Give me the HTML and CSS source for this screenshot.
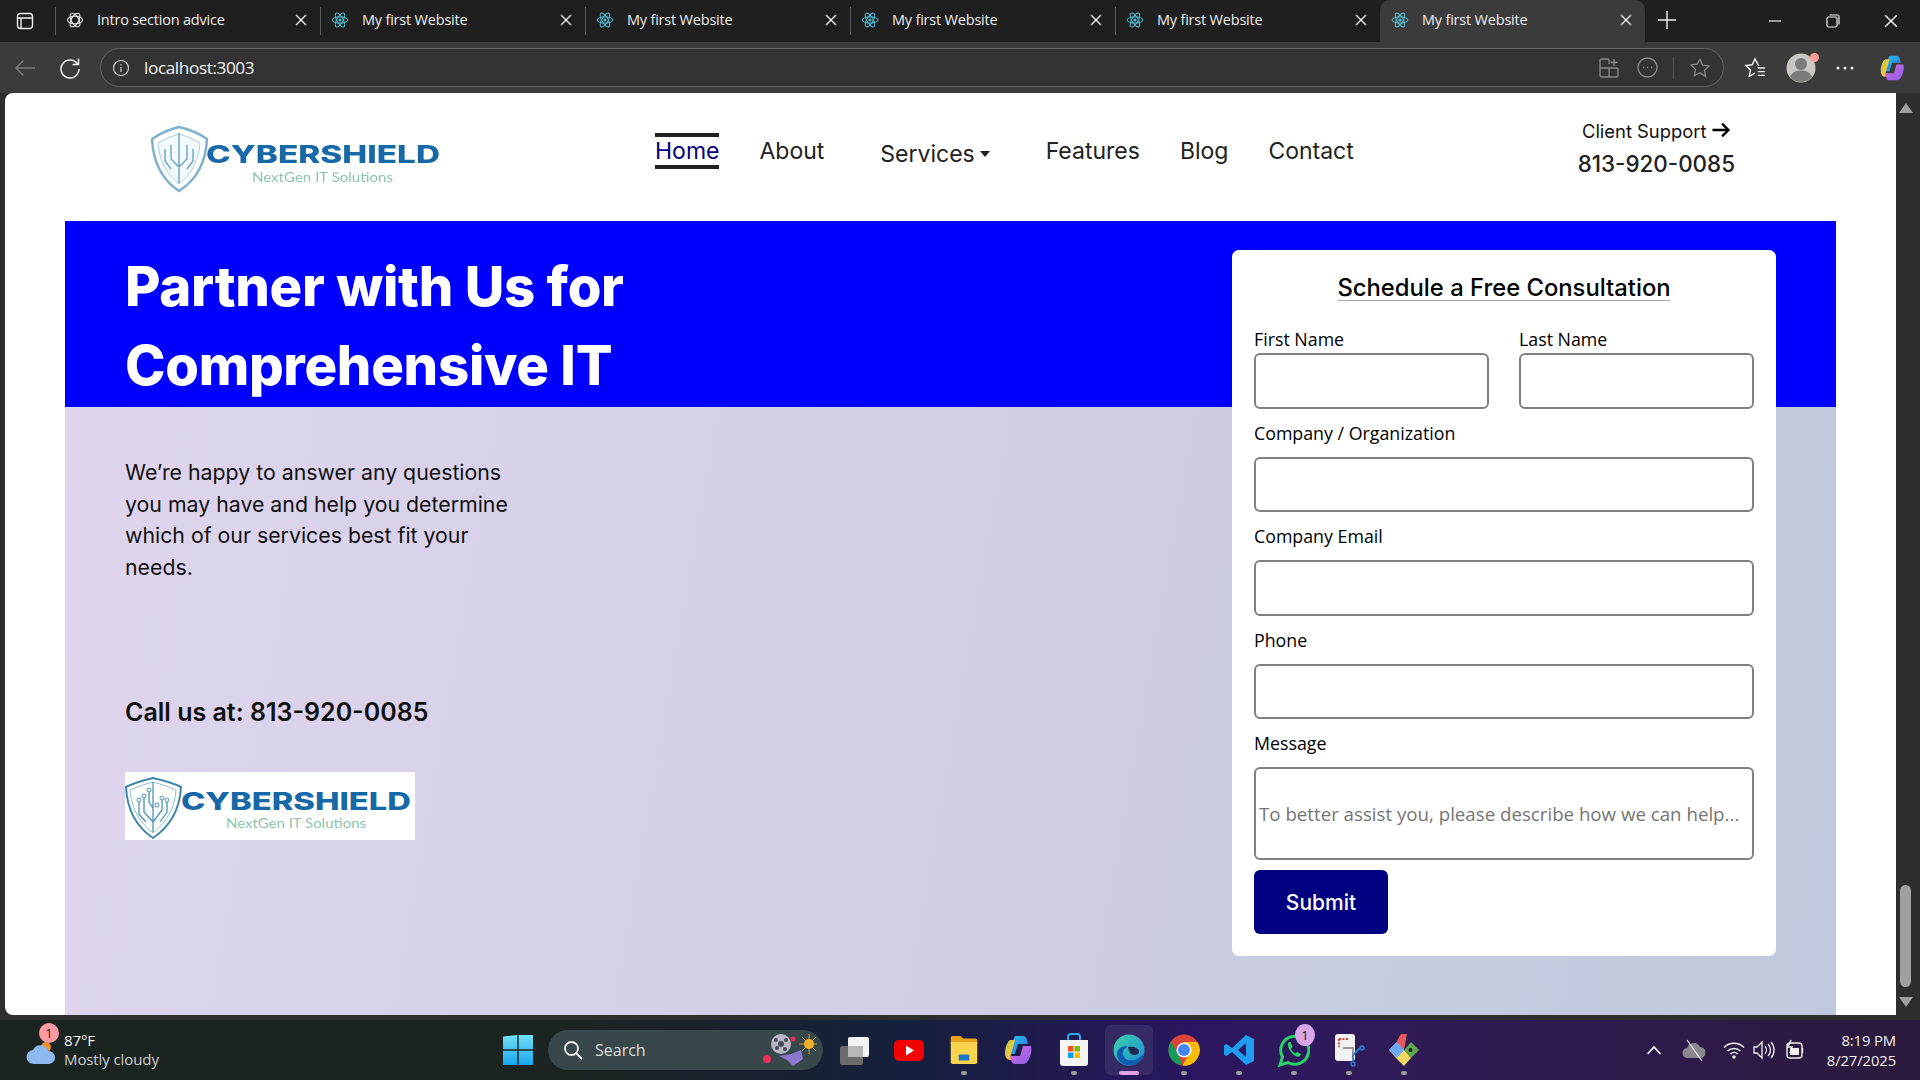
FILE: index.html
```html
<!DOCTYPE html>
<html lang="en">

<head>
  <meta charset="UTF-8" />
  <meta name="viewport" content="width=device-width, initial-scale=1.0" />
  <title>My first Website</title>
  <link rel="stylesheet" href="styles.css">
</head>

<body>
  <svg class="defs" width="0" height="0" aria-hidden="true">
    <symbol id="atom" viewBox="0 0 24 24">
      <g fill="none" stroke="#58c4dc" stroke-width="1.3">
        <ellipse cx="12" cy="12" rx="10.5" ry="4.2" />
        <ellipse cx="12" cy="12" rx="10.5" ry="4.2" transform="rotate(60 12 12)" />
        <ellipse cx="12" cy="12" rx="10.5" ry="4.2" transform="rotate(120 12 12)" />
      </g>
      <circle cx="12" cy="12" r="2" fill="#58c4dc" />
    </symbol>
    <symbol id="cross" viewBox="0 0 12 12">
      <path d="M1 1l10 10M11 1L1 11" fill="none" stroke="#fff" stroke-width="1.2" />
    </symbol>
    <symbol id="copilot" viewBox="0 0 32 32">
      <defs>
        <linearGradient id="cpa" x1="0" y1="0" x2="1" y2="1">
          <stop offset="0" stop-color="#27c4e8" />
          <stop offset="1" stop-color="#2f6fe0" />
        </linearGradient>
        <linearGradient id="cpb" x1="0" y1="0" x2="1" y2="1">
          <stop offset="0" stop-color="#9fd24a" />
          <stop offset=".6" stop-color="#f6c63c" />
          <stop offset="1" stop-color="#f2653a" />
        </linearGradient>
        <linearGradient id="cpc" x1="0" y1="0" x2="1" y2="1">
          <stop offset="0" stop-color="#d66ee0" />
          <stop offset="1" stop-color="#8a5be8" />
        </linearGradient>
      </defs>
      <path d="M12 2h8c2 0 3 1 3.6 3l1.4 5h-10l-3 10H4z" fill="url(#cpa)" />
      <path d="M2 19c0-4 1-8 3-11 1-1.500 2-2 3-2h4L8 20c-.6 2 0 6 2 6H7c-3 0-5-3-5-7z" fill="url(#cpb)" />
      <path d="M20 30h-8c-2 0-3-1-3.600-3L7 22h10l3-10h8c1 4 0 9-2 13-1.500 3-3 5-6 5z" fill="url(#cpc)" />
    </symbol>
  </svg>

  <div class="tabstrip">
    <div class="sidebar-btn">
      <svg width="18" height="18" viewBox="0 0 18 18" fill="none" stroke="#f0f0f0" stroke-width="1.400">
        <rect x="1.500" y="1.500" width="15" height="15" rx="3" />
        <path d="M1.500 6h15M5 6v10" />
      </svg>
    </div>
    <div class="tab">
      <svg class="tab-icon" viewBox="0 0 24 24" fill="none" stroke="#e6e6e6" stroke-width="1.500">
        <ellipse cx="12" cy="12" rx="10" ry="5" />
        <ellipse cx="12" cy="12" rx="10" ry="5" transform="rotate(60 12 12)" />
        <ellipse cx="12" cy="12" rx="10" ry="5" transform="rotate(120 12 12)" />
      </svg>
      <span class="tab-title">Intro section advice</span>
      <svg class="tab-close"><use href="#cross" /></svg>
    </div>
    <div class="tab">
      <svg class="tab-icon"><use href="#atom" /></svg>
      <span class="tab-title">My first Website</span>
      <svg class="tab-close"><use href="#cross" /></svg>
    </div>
    <div class="tab">
      <svg class="tab-icon"><use href="#atom" /></svg>
      <span class="tab-title">My first Website</span>
      <svg class="tab-close"><use href="#cross" /></svg>
    </div>
    <div class="tab">
      <svg class="tab-icon"><use href="#atom" /></svg>
      <span class="tab-title">My first Website</span>
      <svg class="tab-close"><use href="#cross" /></svg>
    </div>
    <div class="tab tab-before-active">
      <svg class="tab-icon"><use href="#atom" /></svg>
      <span class="tab-title">My first Website</span>
      <svg class="tab-close"><use href="#cross" /></svg>
    </div>
    <div class="tab active">
      <svg class="tab-icon"><use href="#atom" /></svg>
      <span class="tab-title">My first Website</span>
      <svg class="tab-close"><use href="#cross" /></svg>
    </div>
    <svg class="new-tab" width="18" height="18" viewBox="0 0 18 18">
      <path d="M9 0v18M0 9h18" stroke="#f0f0f0" stroke-width="1.400" />
    </svg>
    <div class="window-btns">
      <svg width="14" height="14" viewBox="0 0 14 14"><path d="M1 7h12" stroke="#eee" stroke-width="1.200" /></svg>
      <svg width="14" height="14" viewBox="0 0 14 14" fill="none" stroke="#eee" stroke-width="1.200">
        <rect x="1" y="3" width="10" height="10" rx="1.500" />
        <path d="M3.500 1h8c1 0 1.500.5 1.500 1.500v8" />
      </svg>
      <svg width="14" height="14" viewBox="0 0 14 14"><use href="#cross" /></svg>
    </div>
  </div>

  <div class="toolbar">
    <svg class="nav-btn back" width="22" height="18" viewBox="0 0 22 18" fill="none" stroke="#7a7a7a" stroke-width="1.400">
      <path d="M21 9H2M9.500 1.500L2 9l7.500 7.500" />
    </svg>
    <svg class="nav-btn reload" width="22" height="22" viewBox="0 0 22 22" fill="none" stroke="#f2f2f2" stroke-width="1.500">
      <path d="M18.500 7A9 9 0 1 0 20 12" />
      <path d="M19.500 1.500V7.500H13.500" />
    </svg>
    <div class="omnibox">
      <svg width="18" height="18" viewBox="0 0 18 18" fill="none" stroke="#cfcfcf" stroke-width="1.200">
        <circle cx="9" cy="9" r="7.500" />
        <path d="M9 8v5M9 5v1.500" />
      </svg>
      <span class="url">localhost:3003</span>
      <div class="omni-actions">
        <svg width="20" height="20" viewBox="0 0 20 20" fill="none" stroke="#8a8a8a" stroke-width="1.300">
          <path d="M10 6V2.500C10 1.500 9.500 1 8.500 1h-6C1.500 1 1 1.500 1 2.500v15c0 1 .5 1.500 1.500 1.500h15c1 0 1.500-.5 1.500-1.500v-6c0-1-.5-1.500-1.500-1.500H1M10 10v9" />
          <path d="M15 1v7M11.500 4.500h7" />
        </svg>
        <svg width="21" height="21" viewBox="0 0 21 21" fill="none" stroke="#8a8a8a" stroke-width="1.300">
          <circle cx="10.500" cy="10.500" r="9.500" />
          <path d="M6 10.500h1.200M10 10.500h1.200M14 10.500h1.200" />
        </svg>
        <span class="omni-sep"></span>
        <svg width="22" height="22" viewBox="0 0 24 24" fill="none" stroke="#8a8a8a" stroke-width="1.400">
          <path d="M12 2.500l3 6.300 6.900.9-5 4.800 1.200 6.900L12 17.200l-6.100 3.200 1.200-6.900-5-4.800 6.900-.9z" />
        </svg>
      </div>
    </div>
    <div class="toolbar-actions">
      <svg width="22" height="22" viewBox="0 0 24 24" fill="none" stroke="#f2f2f2" stroke-width="1.500">
        <path d="M16 9.500L12 2 9 8.500l-7 .9 5 4.800L5.800 21l6.200-3.300M15 12h8M15 16h8M15 20h8" />
      </svg>
      <div class="profile">
        <svg width="30" height="30" viewBox="0 0 30 30">
          <circle cx="15" cy="15" r="14.500" fill="#c9c7c2" />
          <circle cx="15" cy="11" r="6" fill="#7e7c78" />
          <path d="M4 24c2-5 6-6.500 11-6.500S24 19 26 24a14.500 14.500 0 0 1-22 0z" fill="#7e7c78" />
        </svg>
        <span class="profile-dot"></span>
      </div>
      <svg width="18" height="4" viewBox="0 0 18 4" fill="#eee">
        <circle cx="2" cy="2" r="1.500" />
        <circle cx="9" cy="2" r="1.500" />
        <circle cx="16" cy="2" r="1.500" />
      </svg>
      <svg class="copilot-btn" width="28" height="28"><use href="#copilot" /></svg>
    </div>
  </div>

  <div class="viewport">
    <div class="page">
      <header class="site-header">
        <svg class="logo logo-soft" width="290" height="68" viewBox="0 0 290 68" role="img" aria-label="CyberShield logo">
          <path d="M1 14C11 7 20 4 28 2c9 2 18 5 28 12-1 21-9 40-28 52C10 54 2 35 1 14z" fill="none" stroke="#7fb2cf" stroke-width="2.500" />
          <path d="M7 18c7-4 14-7 21-9 7 2 14 5 21 9-1 16-8 31-21 41C15 49 8 34 7 18z" fill="#f4f9fc" stroke="#a9cfe2" />
          <path d="M28 8v50M20 20v14l8 8M36 20v14l-8 8M14 24v12l6 8M42 24v12l-6 8" fill="none" stroke="#6fa8c8" stroke-width="1.500" />
          <text class="logo-name" x="55" y="38" textLength="234" lengthAdjust="spacingAndGlyphs">CYBERSHIELD</text>
          <text class="logo-tag" x="101" y="57" textLength="141" lengthAdjust="spacingAndGlyphs">NextGen IT Solutions</text>
        </svg>
        <nav class="main-nav">
          <a class="current">Home</a>
          <a>About</a>
          <a class="dropdown">Services<i class="caret"></i></a>
          <a>Features</a>
          <a>Blog</a>
          <a>Contact</a>
        </nav>
        <div class="support">
          <div class="support-label">Client Support
            <svg width="19" height="16" viewBox="0 0 17 15" fill="none" stroke="#000" stroke-width="2.200">
              <path d="M0 7.500h15M9 1.500l6 6-6 6" />
            </svg>
          </div>
          <div class="support-phone">813-920-0085</div>
        </div>
      </header>

      <section class="hero">
        <div class="hero-copy">
          <h1>Partner with Us for Comprehensive IT</h1>
          <p class="hero-text">We’re happy to answer any questions you may have and help you determine which of our services best fit your needs.</p>
          <p class="hero-call">Call us at: 813-920-0085</p>
          <svg class="logo logo-card" width="290" height="68" viewBox="0 0 290 68" role="img" aria-label="CyberShield logo">
            <path d="M1 15C11 10 20 8 28 6c9 2 18 4 28 9-1 20-9 38-28 51C10 54 2 35 1 15z" fill="none" stroke="#3f86aa" stroke-width="2" />
            <path d="M5 18c7-3 15-6 23-8 8 2 16 5 23 8-1 16-8 31-23 43C13 49 6 34 5 18z" fill="none" stroke="#8cc0d8" />
            <path d="M28 10v50M19 24v16l9 10M37 26v12l-9 12M14 28v14l7 8M42 28v12l-7 10M24 18v12l4 6" fill="none" stroke="#4a94b8" stroke-width="1.300" />
            <g fill="#fff" stroke="#4a94b8">
              <circle cx="19" cy="24" r="2" />
              <circle cx="37" cy="26" r="2" />
              <circle cx="14" cy="28" r="2" />
              <circle cx="42" cy="28" r="2" />
              <circle cx="24" cy="18" r="2" />
              <circle cx="32" cy="33" r="2" />
            </g>
            <text class="logo-name" x="56" y="38" textLength="230" lengthAdjust="spacingAndGlyphs">CYBERSHIELD</text>
            <text class="logo-tag" x="101" y="56" textLength="140" lengthAdjust="spacingAndGlyphs">NextGen IT Solutions</text>
          </svg>
        </div>

        <form class="consult-card">
          <h3>Schedule a Free Consultation</h3>
          <div class="name-row">
            <div>
              <label class="name-label" for="first">First Name</label>
              <input id="first" type="text" />
            </div>
            <div>
              <label class="name-label" for="last">Last Name</label>
              <input id="last" type="text" />
            </div>
          </div>
          <label for="company">Company / Organization</label>
          <input id="company" type="text" />
          <label for="email">Company Email</label>
          <input class="field-tall" id="email" type="email" />
          <label for="phone">Phone</label>
          <input id="phone" type="tel" />
          <label for="message">Message</label>
          <textarea id="message" placeholder="To better assist you, please describe how we can help..."></textarea>
          <button class="submit" type="button">Submit</button>
        </form>
      </section>
    </div>

    <div class="scrollbar">
      <i class="arrow-up"></i>
      <div class="scroll-bottom">
        <div class="thumb"></div>
        <i class="arrow-down"></i>
      </div>
    </div>
  </div>
  <div class="viewport-foot"></div>

  <footer class="taskbar">
    <div class="weather">
      <div class="weather-icon">
        <svg width="30" height="24" viewBox="0 0 30 24">
          <circle cx="20" cy="6" r="5" fill="#f0902c" />
          <path d="M8 23a7 7 0 0 1-1-14 8 8 0 0 1 15 1 6.500 6.500 0 0 1 1 13z" fill="#8db8f0" />
        </svg>
        <span class="weather-badge">1</span>
      </div>
      <div class="weather-text">
        <span>87°F</span>
        <span class="weather-desc">Mostly cloudy</span>
      </div>
    </div>

    <svg class="win-logo" width="30" height="30" viewBox="0 0 30 30">
      <defs>
        <linearGradient id="win" x1="0" y1="0" x2="0" y2="1">
          <stop offset="0" stop-color="#6fe0f5" />
          <stop offset="1" stop-color="#1aa5f0" />
        </linearGradient>
      </defs>
      <path d="M0 1.500L14.300 0v14.300H0zM15.700 0H30v14.300H15.700zM0 15.700h14.300V30H0zM15.700 15.700H30V30H15.700z" fill="url(#win)" />
    </svg>

    <div class="searchbox">
      <svg width="20" height="20" viewBox="0 0 20 20" fill="none" stroke="#eee" stroke-width="1.800">
        <circle cx="8.500" cy="8.500" r="6.500" />
        <path d="M13.500 13.500L19 19" />
      </svg>
      <span>Search</span>
      <svg class="search-art" width="58" height="36" viewBox="0 0 58 36">
        <circle cx="22" cy="12" r="10" fill="#b9b6c6" />
        <circle cx="22" cy="12" r="3" fill="#4a4a58" />
        <circle cx="17" cy="8" r="2" fill="#4a4a58" />
        <circle cx="27" cy="8" r="2" fill="#4a4a58" />
        <circle cx="18" cy="16" r="2" fill="#4a4a58" />
        <circle cx="26" cy="17" r="2" fill="#4a4a58" />
        <path d="M20 24l12-2 10-4 2 9-10 7-6-6z" fill="#8a78d0" />
        <circle cx="8" cy="27" r="4" fill="#e8305a" />
        <circle cx="34" cy="7" r="2.500" fill="#e8305a" />
        <circle cx="50" cy="12" r="5" fill="#f2b02c" />
        <path d="M50 2v20M40 12h18M43 5l14 14M57 5L43 19" stroke="#f2b02c" stroke-width=".8" />
      </svg>
    </div>

    <div class="task-icons">
      <div class="task-slot">
        <svg width="32" height="32" viewBox="0 0 32 32">
          <rect x="2" y="12" width="23" height="19" rx="2" fill="#6b6b6b" />
          <rect x="10" y="3" width="21" height="20" rx="2" fill="#f2f2f2" />
          <rect x="10" y="12" width="15" height="11" fill="#b8b8b8" />
        </svg>
      </div>
      <div class="task-slot">
        <svg width="32" height="32" viewBox="0 0 32 32">
          <rect x="1" y="6" width="30" height="21" rx="5" fill="#f40000" />
          <path d="M13 11.500v10l8-5z" fill="#fff" />
        </svg>
      </div>
      <div class="task-slot running">
        <svg width="30" height="30" viewBox="0 0 32 34">
          <path d="M1 3c0-1 1-2 2-2h9l3 3h14c1 0 2 1 2 2v4H1z" fill="#e8a41c" />
          <path d="M1 8h30v23c0 1-1 2-2 2H3c-1 0-2-1-2-2z" fill="#fbd44e" />
          <rect x="10" y="22" width="12" height="7" rx="1" fill="#1a78c8" />
        </svg>
      </div>
      <div class="task-slot">
        <svg width="32" height="32"><use href="#copilot" /></svg>
      </div>
      <div class="task-slot running">
        <svg width="30" height="34" viewBox="0 0 30 34">
          <path d="M9 8V4c0-2 1-3 3-3h6c2 0 3 1 3 3v4" fill="none" stroke="#2aa8e8" stroke-width="2" />
          <path d="M1 7h28v23c0 2-1 3-3 3H4c-2 0-3-1-3-3z" fill="#f4f4f4" />
          <rect x="9" y="13" width="5.500" height="5.500" fill="#f25022" />
          <rect x="15.500" y="13" width="5.500" height="5.500" fill="#7fba00" />
          <rect x="9" y="19.500" width="5.500" height="5.500" fill="#00a4ef" />
          <rect x="15.500" y="19.500" width="5.500" height="5.500" fill="#ffb900" />
        </svg>
      </div>
      <div class="task-slot current-app">
        <svg width="32" height="34" viewBox="0 0 32 32">
          <defs>
            <linearGradient id="edgeA" x1="0" y1="0" x2="1" y2="1">
              <stop offset="0" stop-color="#3fd0a8" />
              <stop offset="1" stop-color="#1a8ed8" />
            </linearGradient>
          </defs>
          <circle cx="16" cy="16" r="15.500" fill="url(#edgeA)" />
          <path d="M31 19c-1 8-8 12.500-14 12.500C9 31.500 3 26 4 19c1-5 7-8 11-6-5 1-6 6-4 10 3 5 13 5 20-4z" fill="#0c5fb0" />
          <path d="M15 13c6-1 11 1 11 5 0 2-2 3-5 3-4 0-5-4-6-8z" fill="#1e2a52" />
        </svg>
      </div>
      <div class="task-slot running">
        <svg width="32" height="32" viewBox="0 0 32 32">
          <circle cx="16" cy="16" r="15.500" fill="#db4437" />
          <path d="M16 8h13.500a15.500 15.500 0 0 1-15 23.500L21 20z" fill="#fbbc05" />
          <path d="M3 7.500L10 20l4.500 11.500A15.500 15.500 0 0 1 3 7.500z" fill="#0f9d58" />
          <circle cx="16" cy="16" r="7.500" fill="#fff" />
          <circle cx="16" cy="16" r="6" fill="#4285f4" />
        </svg>
      </div>
      <div class="task-slot running">
        <svg width="32" height="32" viewBox="0 0 32 32">
          <path d="M23 1l8 4v22l-8 4L9 18l-5.500 4L1 20.500v-9L3.500 10 9 14zM23 9l-8 7 8 7z" fill="#1f9cf0" />
        </svg>
      </div>
      <div class="task-slot running">
        <svg width="32" height="34" viewBox="0 0 32 34">
          <path d="M2 32l2.500-8A14 14 0 1 1 10 29.500z" fill="none" stroke="#25d366" stroke-width="3" />
          <path d="M11 9c-2 2-1 6 2 10s7 6 9 4l1-2-4-2-1.500 1.500c-2-1-4-3-4.500-5L14.500 14l-2-5z" fill="#25d366" />
        </svg>
        <span class="app-badge">1</span>
      </div>
      <div class="task-slot running">
        <svg width="32" height="34" viewBox="0 0 32 34">
          <rect x="2" y="1" width="20" height="27" rx="3" fill="#f2f2f2" />
          <path d="M6 6h10M6 6v8" stroke="#d8442c" stroke-width="2" stroke-dasharray="2 1.500" fill="none" />
          <path d="M10 15h10v8" fill="none" stroke="#9a9a9a" stroke-width="2" />
          <path d="M20 22l8-8M20 22v6" stroke="#2a7fd0" stroke-width="1.800" fill="none" />
          <circle cx="20" cy="31" r="2" fill="none" stroke="#2a7fd0" stroke-width="1.500" />
          <circle cx="29" cy="15" r="2" fill="none" stroke="#2a7fd0" stroke-width="1.500" />
        </svg>
      </div>
      <div class="task-slot running">
        <svg width="32" height="34" viewBox="0 0 32 34">
          <path d="M16 17L1 17 8.500 9z" fill="#6ea8f5" />
          <path d="M16 17L8.500 9 13 1h6z" fill="#e85a5a" />
          <path d="M16 17l7-8 8 8-8 8z" fill="#5aa84a" />
          <path d="M16 17H1l8 9 7 7 7-8z" fill="#f2d860" />
          <path d="M1 17l8-8 7 8-7 8z" fill="#6ea8f5" />
          <circle cx="22.500" cy="17" r="2" fill="#1e1e1e" />
        </svg>
      </div>
    </div>

    <div class="tray">
      <svg width="16" height="10" viewBox="0 0 16 10" fill="none" stroke="#f2f2f2" stroke-width="1.800">
        <path d="M1.500 9L8 2l6.500 7" />
      </svg>
      <svg class="tray-cloud" width="24" height="24" viewBox="0 0 24 24">
        <path d="M6 20a5 5 0 0 1-1-10 7 7 0 0 1 13-1 5.500 5.500 0 0 1 0 11z" fill="#8b8790" />
        <path d="M5 2l15 21" stroke="#f2f2f2" stroke-width="1.200" />
      </svg>
      <svg class="tray-wifi" width="22" height="18" viewBox="0 0 22 18" fill="none" stroke="#f2f2f2" stroke-width="1.500">
        <path d="M1 6.500a14 14 0 0 1 20 0M4.500 10a9.500 9.500 0 0 1 13 0M7.500 13a5 5 0 0 1 7 0" />
        <circle cx="11" cy="16" r="1" fill="#f2f2f2" />
      </svg>
      <svg width="22" height="20" viewBox="0 0 22 20" fill="none" stroke="#f2f2f2" stroke-width="1.300">
        <path d="M1 7v6h3l5 5V2L4 7z" />
        <path d="M12 6.500a5 5 0 0 1 0 7M15 4a8.500 8.500 0 0 1 0 12M18 2a12 12 0 0 1 0 16" />
      </svg>
      <svg width="22" height="22" viewBox="0 0 22 22" fill="none" stroke="#f2f2f2" stroke-width="1.400">
        <rect x="4" y="4" width="15" height="15" rx="3" />
        <path d="M19.500 9v5" />
        <path d="M8 1L5 8h4l-2 6" />
        <rect x="7" y="9" width="9" height="7" fill="#f2f2f2" stroke="none" />
      </svg>
      <div class="clock">
        <span>8:19 PM</span>
        <span>8/27/2025</span>
      </div>
    </div>
  </footer>
</body>

</html>
```

FILE: styles.css
```css
/* reset */
* {
  box-sizing: border-box;
}

body {
  margin: 0;
  width: 1920px;
  height: 1080px;
  overflow: hidden;
  display: flex;
  flex-direction: column;
  background: #2e2e2e;
  font-family: "Inter", "Liberation Sans", sans-serif;
}

.defs {
  position: absolute;
}

/* browser tab strip */
.tabstrip {
  height: 42px;
  display: flex;
  align-items: center;
  background: #1f1f1f;
  font-family: "Open Sans", sans-serif;
  color: #ececec;
}

.sidebar-btn {
  width: 55px;
  padding-left: 16px;
  display: flex;
}

.tab {
  width: 265px;
  height: 42px;
  display: flex;
  align-items: center;
  position: relative;
  padding-left: 11px;
  padding-bottom: 3px;
}

.tab::before {
  content: "";
  position: absolute;
  left: 0;
  top: 7px;
  height: 28px;
  width: 1px;
  background: #5a5a5a;
}

.tab.active {
  background: #3b3b3b;
  border-radius: 10px 10px 0 0;
}

.tab.active::before {
  display: none;
}

.tab-icon {
  width: 18px;
  height: 18px;
  flex: none;
}

.tab-title {
  margin-left: 13px;
  font-size: 14.500px;
  letter-spacing: -0.2px;
  flex: 1;
}

.tab-close {
  width: 12px;
  height: 12px;
  margin-right: 13px;
  flex: none;
}

.new-tab {
  margin-left: 13px;
  margin-bottom: 2px;
}

.window-btns {
  margin-left: auto;
  width: 152px;
  padding-right: 22px;
  display: flex;
  justify-content: space-between;
  align-items: center;
}

/* browser toolbar */
.toolbar {
  height: 51px;
  display: flex;
  align-items: center;
  background: #3b3b3b;
}

.nav-btn.back {
  margin-left: 14px;
}

.nav-btn.reload {
  margin-left: 23px;
}

.omnibox {
  margin-left: 19px;
  width: 1624px;
  height: 39px;
  display: flex;
  align-items: center;
  padding-left: 11px;
  background: #333;
  border: 1.5px solid #666;
  border-radius: 20px;
}

.url {
  margin-left: 14px;
  color: #f2f2f2;
  font-size: 17.200px;
  font-family: "Open Sans", sans-serif;
  letter-spacing: -0.4px;
}

.omni-actions {
  margin-left: auto;
  display: flex;
  align-items: center;
  padding-right: 12px;
  gap: 18px;
}

.omni-sep {
  width: 1px;
  height: 22px;
  background: #5a5a5a;
  margin: 0 -3px;
}

.toolbar-actions {
  display: flex;
  align-items: center;
  margin-left: 20px;
  gap: 20px;
}

.copilot-btn {
  margin-left: 5px;
}

.profile {
  position: relative;
  display: flex;
}

.profile-dot {
  position: absolute;
  top: 0;
  right: -3px;
  width: 9px;
  height: 9px;
  border-radius: 50%;
  background: #ff9b9b;
}

/* page area */
.viewport {
  height: 922px;
  display: flex;
  padding-left: 5px;
}

.page {
  width: 1891px;
  background: #fff;
  border-radius: 8px 0 0 8px;
  overflow: hidden;
}

.viewport-foot {
  height: 5px;
  background: #2e2e2e;
}

.site-header {
  height: 128px;
  display: flex;
  align-items: flex-start;
  padding-left: 146px;
  padding-right: 161px;
  color: #222;
}

.logo {
  flex: none;
  display: block;
}

.logo-soft {
  margin-top: 32px;
  filter: blur(0.5px);
}

.logo-name {
  font-family: "Inter", sans-serif;
  font-weight: 800;
  font-size: 24px;
  fill: #1668a6;
}

.logo-tag {
  font-family: "Lato", sans-serif;
  font-size: 14px;
  fill: #8cc7ac;
}

.main-nav {
  display: flex;
  align-items: center;
  margin-top: 37px;
  margin-left: 214px;
  gap: 40px;
  font-size: 23px;
}

.main-nav a {
  border-top: 4px solid transparent;
  border-bottom: 4px solid transparent;
  height: 36px;
  line-height: 29px;
  white-space: nowrap;
}

.main-nav a.current {
  color: #000080;
  border-color: #222;
}

.main-nav a.dropdown {
  display: flex;
  align-items: center;
  margin: 6px 16px 0;
}

.caret {
  margin-left: 5px;
  border-top: 6px solid #222;
  border-left: 5px solid transparent;
  border-right: 5px solid transparent;
}

.support {
  margin-left: auto;
  margin-top: 23px;
  text-align: center;
}

.support-label {
  font-size: 18.400px;
  line-height: 30px;
  color: #111;
}

.support-phone {
  font-size: 22.400px;
  line-height: 36px;
  font-weight: 500;
}

/* hero section */
.hero {
  margin: 0 60px;
  height: 794px;
  display: flex;
  justify-content: space-between;
  background:
    linear-gradient(#0000ff, #0000ff) top / 100% 186px no-repeat,
    linear-gradient(100deg, #e0d5ee, #bfc8dc);
}

.hero-copy {
  padding-left: 60px;
  padding-top: 26px;
}

.hero-copy h1 {
  margin: 0;
  width: 560px;
  color: #fff;
  font-size: 54.500px;
  line-height: 79px;
  font-weight: 800;
  letter-spacing: -0.3px;
}

.hero-text {
  margin: 52px 0 0;
  width: 400px;
  font-size: 21.300px;
  line-height: 31.700px;
  color: #111;
}

.hero-call {
  margin: 113px 0 0;
  font-size: 25px;
  line-height: 30px;
  font-weight: 600;
  color: #111;
}

.logo-card {
  margin-top: 45px;
  background: #fff;
}

/* consultation form */
.consult-card {
  margin-top: 29px;
  margin-right: 60px;
  width: 544px;
  height: 706px;
  padding: 20px 22px 22px;
  background: #fff;
  border-radius: 7px;
  font-family: "Open Sans", sans-serif;
  color: #000;
}

.consult-card h3 {
  margin: 0 0 21px;
  text-align: center;
  font-family: "Inter", sans-serif;
  font-size: 23.800px;
  line-height: 36px;
  font-weight: 500;
  text-decoration: underline;
  text-decoration-thickness: 1px;
  text-decoration-color: #aaa;
  text-underline-offset: 4px;
}

.name-row {
  display: grid;
  grid-template-columns: 235px 235px;
  justify-content: space-between;
  margin-bottom: 12px;
}

.consult-card label {
  display: block;
  font-size: 17.800px;
  line-height: 24px;
  margin-bottom: 12px;
}

.consult-card label.name-label {
  margin-bottom: 2px;
}

.consult-card input,
.consult-card textarea {
  display: block;
  width: 100%;
  height: 55px;
  margin-bottom: 12px;
  border: 2px solid #808080;
  border-radius: 6px;
  background: #fff;
  outline: none;
  resize: none;
  font-family: "Open Sans", sans-serif;
}

.consult-card input.field-tall,
.name-row input {
  height: 56px;
}

.name-row input {
  margin-bottom: 0;
}

.consult-card textarea {
  height: 93px;
  margin-bottom: 10px;
  padding: 33px 3px 0;
  font-size: 18.700px;
  line-height: 24px;
  overflow: hidden;
}

.consult-card textarea::placeholder {
  color: #757575;
}

.submit {
  display: block;
  width: 134px;
  height: 64px;
  border: none;
  border-radius: 6px;
  background: #000080;
  color: #fff;
  font-family: "Inter", sans-serif;
  font-size: 21px;
  font-weight: 500;
}

/* scrollbar */
.scrollbar {
  width: 24px;
  display: flex;
  flex-direction: column;
  justify-content: space-between;
  align-items: center;
  padding: 10px 5px 8px 0;
  background: #2e2e2e;
}

.arrow-up {
  border-bottom: 10px solid #a0a0a0;
  border-left: 7px solid transparent;
  border-right: 7px solid transparent;
}

.arrow-down {
  border-top: 10px solid #a0a0a0;
  border-left: 7px solid transparent;
  border-right: 7px solid transparent;
}

.scroll-bottom {
  display: flex;
  flex-direction: column;
  align-items: center;
  gap: 10px;
}

.thumb {
  width: 11px;
  height: 102px;
  border-radius: 6px;
  background: #a0a0a0;
}

/* windows taskbar */
.taskbar {
  height: 60px;
  display: flex;
  align-items: center;
  color: #f2f2f2;
  font-family: "Open Sans", sans-serif;
  background: linear-gradient(90deg, #1c2422 0%, #1c2422 30%, #15203c 47%, #2a1660 62%, #301a58 72%, #2b1a3c 100%);
}

.weather {
  width: 503px;
  display: flex;
  align-items: center;
  padding-left: 26px;
}

.weather-icon {
  position: relative;
  width: 38px;
  margin-top: 10px;
}

.weather-badge {
  position: absolute;
  left: 13px;
  top: -18px;
  width: 20px;
  height: 20px;
  border-radius: 50%;
  background: #ff9aa2;
  color: #222;
  font-size: 13px;
  line-height: 20px;
  text-align: center;
}

.weather-text {
  display: flex;
  flex-direction: column;
  font-size: 15px;
  line-height: 19px;
  letter-spacing: -0.1px;
}

.weather-desc {
  color: #cfcfcf;
}

.win-logo {
  flex: none;
}

.searchbox {
  margin-left: 15px;
  width: 275px;
  height: 40px;
  padding-left: 15px;
  display: flex;
  align-items: center;
  gap: 12px;
  border-radius: 20px;
  background: #38474a;
  font-size: 16px;
  color: #ddd;
}

.search-art {
  margin-left: auto;
  margin-right: 6px;
}

.task-icons {
  display: flex;
  margin-left: 3px;
}

.task-slot {
  width: 55px;
  height: 50px;
  display: flex;
  align-items: center;
  justify-content: center;
  position: relative;
}

.task-slot.running::after,
.task-slot.current-app::after {
  content: "";
  position: absolute;
  left: 50%;
  bottom: 0;
  width: 6px;
  height: 4px;
  margin-left: -3px;
  border-radius: 2px;
  background: #9a9a9a;
}

.task-slot.current-app {
  background: rgba(255, 255, 255, 0.08);
  border-radius: 6px;
  width: 48px;
  margin: 0 3.500px;
}

.task-slot.current-app::after {
  width: 20px;
  margin-left: -10px;
  background: #e0a0e8;
}

.app-badge {
  position: absolute;
  top: -1px;
  right: 6px;
  width: 20px;
  height: 22px;
  border-radius: 50%;
  background: #d8a6e8;
  color: #222;
  font-size: 13px;
  line-height: 22px;
  text-align: center;
}

.tray {
  margin-left: auto;
  padding-right: 24px;
  display: flex;
  align-items: center;
  gap: 8px;
}

.tray-cloud {
  margin-left: 12px;
}

.tray-wifi {
  margin-left: 9px;
}

.clock {
  margin-left: 14px;
  display: flex;
  flex-direction: column;
  align-items: flex-end;
  font-size: 14.800px;
  line-height: 20px;
  letter-spacing: -0.1px;
}
```
